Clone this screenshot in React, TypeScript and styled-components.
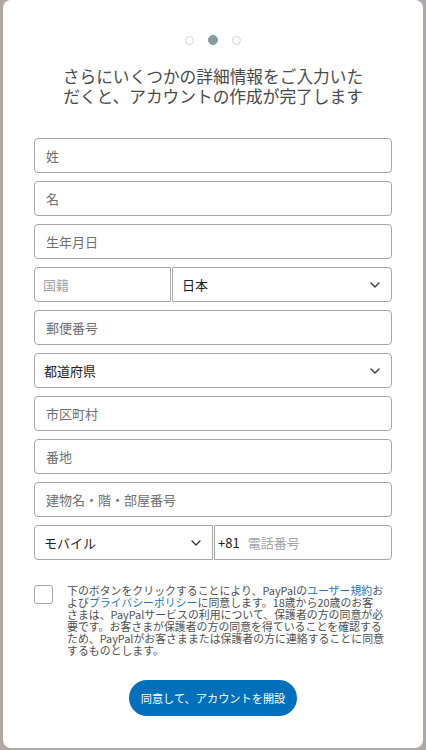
import styled, {createGlobalStyle} from 'styled-components'

const GlobalStyle = createGlobalStyle`
  html, body {
    margin: 0;
    padding: 0;
    background: #b2a8a3;
  }
  body {
    font-family: "Noto Sans CJK JP", "Noto Sans", sans-serif;
  }
`

const Card = styled.div`
  box-sizing: border-box;
  width: 420px;
  height: 748px;
  margin: 0 3px 2px 3px;
  background: #fff;
  border-radius: 8px;
  padding: 35px 31px 0;
  display: flex;
  flex-direction: column;
  align-items: stretch;
  > * {
    flex-shrink: 0;
  }
`

const Steps = styled.div`
  display: flex;
  justify-content: center;
  align-items: center;
  gap: 14px;
  height: 10px;
`

const Dot = styled.span<{active?: boolean}>`
  box-sizing: border-box;
  width: ${p => (p.active ? 10 : 9)}px;
  height: ${p => (p.active ? 10 : 9)}px;
  border-radius: 50%;
  border: 1px solid ${p => (p.active ? '#879ba1' : '#d8d6bd')};
  background: ${p => (p.active ? '#879ba1' : '#fff')};
`

const Title = styled.h1`
  margin: 21px auto 0;
  width: 306px;
  font-size: 16.7px;
  line-height: 20px;
  font-weight: 400;
  color: #4a4a4a;
  text-align: center;
`

const Form = styled.div`
  margin-top: 32px;
  display: flex;
  flex-direction: column;
  gap: 8px;
`

const Row = styled.div`
  display: flex;
  gap: 1px;
`

const Input = styled.input<{light?: boolean; inset?: number; side?: 'left' | 'right'}>`
  box-sizing: border-box;
  flex: ${p => (p.side ? '1 1 0' : 'none')};
  min-width: 0;
  width: ${p => (p.side ? 'auto' : '100%')};
  height: 35px;
  margin: 0;
  border: 1px solid #a7a7a7;
  border-radius: ${p =>
    p.side === 'left' ? '4px 0 0 4px' : p.side === 'right' ? '0 4px 4px 0' : '4px'};
  padding: 0 0 0 ${p => p.inset ?? 11}px;
  font-family: inherit;
  font-size: 13px;
  color: #2c2e2f;
  background: #fff;
  outline: none;
  &::placeholder {
    color: ${p => (p.light ? '#a3a3a3' : '#6f6f6f')};
  }
`

const Select = styled.div<{side?: 'left' | 'right'; width?: number}>`
  box-sizing: border-box;
  ${p => (p.width ? `width: ${p.width}px; flex: none;` : '')}
  height: 35px;
  border: 1px solid #a7a7a7;
  border-radius: ${p =>
    p.side === 'left' ? '4px 0 0 4px' : p.side === 'right' ? '0 4px 4px 0' : '4px'};
  padding: 0 11px 0 9px;
  display: flex;
  align-items: center;
  justify-content: space-between;
  font-size: 13px;
  color: #222;
`

const Phone = styled.div`
  box-sizing: border-box;
  flex: 1 1 0;
  min-width: 0;
  height: 35px;
  border: 1px solid #a7a7a7;
  border-radius: 0 4px 4px 0;
  padding-left: 3px;
  display: flex;
  align-items: center;
  gap: 8px;
  font-size: 13px;
  color: #222;
  > input {
    flex: 1 1 0;
    width: 0;
    min-width: 0;
    border: none;
    outline: none;
    padding: 0;
    font-family: inherit;
    font-size: 13px;
    &::placeholder {
      color: #a3a3a3;
    }
  }
`

const Terms = styled.div`
  margin-top: 25px;
  display: flex;
  align-items: flex-start;
  gap: 14px;
`

const Checkbox = styled.span`
  box-sizing: border-box;
  flex: none;
  width: 19px;
  height: 19px;
  border: 1.5px solid #a5a5a5;
  border-radius: 3px;
`

const TermsText = styled.p`
  margin: 0;
  font-size: 10.9px;
  line-height: 11.9px;
  color: #505050;
  white-space: nowrap;
`

const Link = styled.a`
  color: #1a77c0;
  text-decoration: none;
`

const Submit = styled.button`
  align-self: center;
  margin-top: 24px;
  height: 36px;
  padding: 0 12px;
  border: none;
  border-radius: 18px;
  background: #0070ba;
  color: #fff;
  font-family: inherit;
  font-size: 11.2px;
  cursor: pointer;
`

const Chevron = () => (
  <svg width="10" height="6" viewBox="0 0 10 6" fill="none">
    <path d="M1 1l4 4 4-4" stroke="#333" strokeWidth="1.3" strokeLinecap="round" strokeLinejoin="round" />
  </svg>
)

const App: React.FC = () => {
  return (
    <>
      <GlobalStyle />
      <Card>
        <Steps>
          <Dot />
          <Dot active />
          <Dot />
        </Steps>
        <Title>さらにいくつかの詳細情報をご入力いただくと、アカウントの作成が完了します</Title>
        <Form>
          <Input placeholder="姓" />
          <Input placeholder="名" />
          <Input placeholder="生年月日" />
          <Row>
            <Input placeholder="国籍" light inset={8} side="left" />
            <Select side="right" width={220}>
              <span>日本</span>
              <Chevron />
            </Select>
          </Row>
          <Input placeholder="郵便番号" />
          <Select>
            <span>都道府県</span>
            <Chevron />
          </Select>
          <Input placeholder="市区町村" />
          <Input placeholder="番地" />
          <Input placeholder="建物名・階・部屋番号" />
          <Row>
            <Select side="left" width={179}>
              <span>モバイル</span>
              <Chevron />
            </Select>
            <Phone>
              <span>+81</span>
              <input placeholder="電話番号" />
            </Phone>
          </Row>
        </Form>
        <Terms>
          <Checkbox />
          <TermsText>
            下のボタンをクリックすることにより、PayPalの<Link>ユーザー規約</Link>お
            <br />
            よび<Link>プライバシーポリシー</Link>に同意します。18歳から20歳のお客
            <br />
            さまは、PayPalサービスの利用について、保護者の方の同意が必
            <br />
            要です。お客さまが保護者の方の同意を得ていることを確認する
            <br />
            ため、PayPalがお客さままたは保護者の方に連絡することに同意
            <br />
            するものとします。
          </TermsText>
        </Terms>
        <Submit>同意して、アカウントを開設</Submit>
      </Card>
    </>
  )
}

export default App
